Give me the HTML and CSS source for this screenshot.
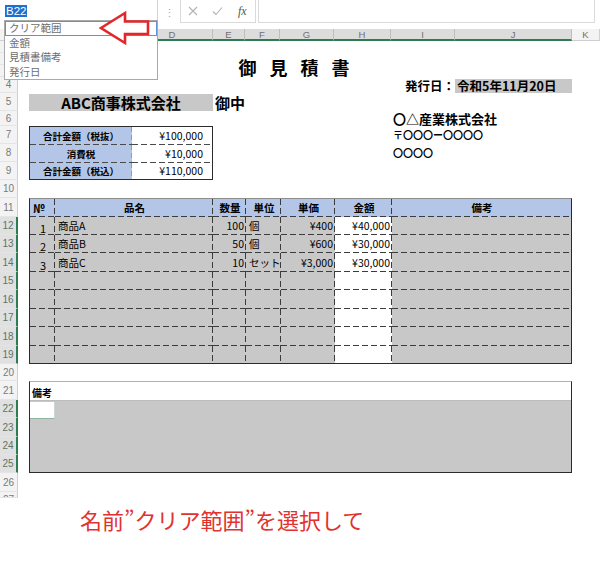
FILE: index.html
```html
<!DOCTYPE html>
<html lang="ja">
<head>
<meta charset="utf-8">
<title>御見積書</title>
<link rel="stylesheet" href="styles.css">
</head>
<body>
<div class="app">
  <div class="toolbar">
    <div class="namebox"><span class="sel">B22</span></div>
    <div class="grip">⋮</div>
    <div class="fbtns">
      <span class="fb"><svg width="10" height="10" viewBox="0 0 10 10"><path d="M1 1L9 9M9 1L1 9" stroke="#b3b3b3" stroke-width="1.1" fill="none"/></svg></span>
      <span class="fb"><svg width="11" height="10" viewBox="0 0 11 10"><path d="M1 5.5L4 8.5L10 1.5" stroke="#b3b3b3" stroke-width="1.1" fill="none"/></svg></span>
      <span class="fb fx">fx</span>
    </div>
    <div class="finput"></div>
  </div>

  <div class="sheet">
    <div class="ch"></div>
    <div class="ch"></div>
    <div class="ch on"></div>
    <div class="ch on"></div>
    <div class="ch on">D</div>
    <div class="ch on">E</div>
    <div class="ch on">F</div>
    <div class="ch on">G</div>
    <div class="ch on">H</div>
    <div class="ch on">I</div>
    <div class="ch on">J</div>
    <div class="ch">K</div>

    <div class="rh"></div>
    <div class="rh"></div>
    <div class="rh"></div>
    <div class="rh">4</div>
    <div class="rh">5</div>
    <div class="rh">6</div>
    <div class="rh">7</div>
    <div class="rh">8</div>
    <div class="rh">9</div>
    <div class="rh">10</div>
    <div class="rh">11</div>
    <div class="rh on">12</div>
    <div class="rh on">13</div>
    <div class="rh on">14</div>
    <div class="rh on">15</div>
    <div class="rh on">16</div>
    <div class="rh on">17</div>
    <div class="rh on">18</div>
    <div class="rh on">19</div>
    <div class="rh">20</div>
    <div class="rh">21</div>
    <div class="rh on">22</div>
    <div class="rh on">23</div>
    <div class="rh on">24</div>
    <div class="rh on">25</div>
    <div class="rh">26</div>
    <div class="rh last">27</div>

    <div class="title">御見積書</div>
    <div class="issue-lbl">発行日：</div>
    <div class="issue-date">令和5年11月20日</div>
    <div class="client">ABC商事株式会社</div>
    <div class="onchu">御中</div>
    <div class="co">〇△産業株式会社</div>
    <div class="addr addr1">〒〇〇〇ー〇〇〇〇</div>
    <div class="addr addr2">〇〇〇〇</div>

    <div class="sum">
      <div class="sl">合計金額（税抜）</div><div class="sv">¥100,000</div>
      <div class="sl">消費税</div><div class="sv">¥10,000</div>
      <div class="sl">合計金額（税込）</div><div class="sv">¥110,000</div>
    </div>

    <div class="items">
      <div class="hd no">№</div><div class="hd">品名</div><div class="hd">数量</div><div class="hd">単位</div><div class="hd">単価</div><div class="hd">金額</div><div class="hd">備考</div>

      <div class="no">1</div><div>商品A</div><div class="num">100</div><div>個</div><div class="num">¥400</div><div class="num amt">¥40,000</div><div></div>
      <div class="no">2</div><div>商品B</div><div class="num">50</div><div>個</div><div class="num">¥600</div><div class="num amt">¥30,000</div><div></div>
      <div class="no">3</div><div>商品C</div><div class="num">10</div><div>セット</div><div class="num">¥3,000</div><div class="num amt">¥30,000</div><div></div>
      <div></div><div></div><div></div><div></div><div></div><div class="amt"></div><div></div>
      <div></div><div></div><div></div><div></div><div></div><div class="amt"></div><div></div>
      <div></div><div></div><div></div><div></div><div></div><div class="amt"></div><div></div>
      <div></div><div></div><div></div><div></div><div></div><div class="amt"></div><div></div>
      <div></div><div></div><div></div><div></div><div></div><div class="amt"></div><div></div>
    </div>

    <div class="memo">
      <div class="memo-lbl">備考</div>
      <div class="memo-body"><div class="active"></div></div>
    </div>
  </div>

  <p class="note">名前”クリア範囲”を選択して</p>

  <ul class="names">
    <li class="hot">クリア範囲</li>
    <li>金額</li>
    <li>見積書備考</li>
    <li>発行日</li>
  </ul>

  <svg class="arrow" width="160" height="50" viewBox="0 0 160 50">
    <polygon points="101,28 125,13 125,21.5 148,21.5 148,34 125,34 125,43" fill="#fff" stroke="#e4262b" stroke-width="2.6" stroke-linejoin="miter"/>
  </svg>
</div>
</body>
</html>
```

FILE: styles.css
```css
* { box-sizing: border-box; margin: 0; padding: 0; }

html, body {
  width: 600px;
  height: 563px;
  overflow: hidden;
  background: #fff;
}

body {
  font-family: "Noto Sans CJK JP", "Noto Sans", sans-serif;
  color: #000;
}

.app {
  position: relative;
  width: 600px;
  height: 563px;
}

/* ---------- formula bar ---------- */
.toolbar {
  display: flex;
  align-items: flex-start;
  height: 23px;
  margin-bottom: 6px;
}

.namebox {
  width: 158px;
  height: 20px;
  border-right: 1px solid #d4d4d4;
  padding: 5px 0 0 5px;
  display: flex;
  align-items: flex-start;
}

.sel {
  display: block;
  background: #1f6fd1;
  color: #fff;
  font-family: "Liberation Sans", Arial, sans-serif;
  font-size: 11.5px;
  line-height: 12px;
  padding: 0 1px;
}

.grip {
  width: 22px;
  text-align: center;
  color: #a6a6a6;
  font-size: 11px;
  line-height: 24px;
}

.fbtns {
  width: 76px;
  height: 23px;
  border-left: 1px solid #dadada;
  border-right: 1px solid #dadada;
  border-bottom: 1px solid #dadada;
  display: flex;
  align-items: center;
}

.fb {
  width: 24.5px;
  display: flex;
  justify-content: center;
  align-items: center;
}

.fx {
  font-family: "Liberation Serif", serif;
  font-style: italic;
  color: #555;
  font-size: 12px;
}

.finput {
  flex: 1;
  margin-left: 2px;
  margin-right: 5px;
  height: 23px;
  border: 1px solid #dadada;
  border-top: none;
  background: #fff;
}

/* ---------- sheet grid ---------- */
.sheet {
  display: grid;
  grid-template-columns: 18px 11px 26px 77px 81px 32px 35px 54px 57px 64px 117px 28px;
  grid-template-rows: 12px 12px 12px 12px 16px 18px 15px 18px 18px 18px 18px 19px 18px 18px 19px 18px 19px 18px 19px 18px 17px 19px 18px 19px 18px 18px 19px 6px;
}

.ch {
  background: #f3f3f3;
  border-right: 1px solid #d0d0d0;
  border-bottom: 1px solid #cfcfcf;
  font-family: "Liberation Sans", Arial, sans-serif;
  font-size: 9.5px;
  color: #707070;
  text-align: center;
  line-height: 11px;
}

.ch.on {
  background: #dcdcdc;
  border-bottom: 2px solid #2e7d52;
  border-right-color: #bdbdbd;
}

.rh {
  grid-column: 1;
  background: #f3f3f3;
  border-right: 1px solid #cfcfcf;
  border-bottom: 1px solid #e4e4e4;
  font-family: "Liberation Sans", Arial, sans-serif;
  font-size: 10px;
  color: #7a7a7a;
  display: flex;
  align-items: center;
  justify-content: center;
  overflow: hidden;
}

.rh.on {
  background: #e0e0e0;
  border-right: 2px solid #2e7d52;
  color: #5d7566;
}

.rh.last {
  align-items: flex-start;
  line-height: 12px;
  padding-top: 2px;
}

/* ---------- header block ---------- */
.title {
  grid-row: 2 / 5;
  grid-column: 3 / 12;
  align-self: end;
  text-align: center;
  font-size: 18px;
  font-weight: 700;
  letter-spacing: 13px;
  line-height: 19px;
}

.issue-lbl {
  grid-row: 5;
  grid-column: 10;
  align-self: end;
  text-align: right;
  font-size: 12.5px;
  font-weight: 700;
  line-height: 15px;
}

.issue-date {
  grid-row: 5;
  grid-column: 11;
  margin-top: 2px;
  background: #c8c8c8;
  font-size: 12.5px;
  font-weight: 700;
  line-height: 14px;
  padding-left: 2px;
  display: flex;
  align-items: flex-end;
}

.client {
  grid-row: 6;
  grid-column: 3 / 6;
  background: #c8c8c8;
  font-size: 15px;
  font-weight: 700;
  text-align: center;
  line-height: 17px;
  margin-top: 1px;
}

.onchu {
  grid-row: 6;
  grid-column: 6 / 8;
  align-self: end;
  padding-left: 2px;
  font-size: 15px;
  font-weight: 700;
  line-height: 17px;
}

.co {
  grid-row: 7;
  grid-column: 10 / 12;
  align-self: end;
  padding-left: 2px;
  font-size: 13px;
  font-weight: 700;
  line-height: 15px;
}

.addr {
  grid-column: 10 / 12;
  align-self: end;
  padding: 0 0 3px 2px;
  font-size: 10px;
  font-weight: 700;
  line-height: 12px;
}

.addr1 { grid-row: 8; }
.addr2 { grid-row: 9; }

/* ---------- summary box ---------- */
.sum {
  grid-row: 8 / 11;
  grid-column: 3 / 6;
  border: 1px solid #2b2b2b;
  display: grid;
  grid-template-columns: 102px 1fr;
  grid-template-rows: 18px 18px 1fr;
}

.sum > div {
  display: flex;
  align-items: center;
  font-size: 10.5px;
  line-height: 12px;
  background-image:
    repeating-linear-gradient(90deg, #4a4a4a 0 6px, transparent 6px 9px),
    repeating-linear-gradient(180deg, #9a9a9a 0 5px, transparent 5px 8px);
  background-size: 100% 1px, 1px 100%;
  background-position: left bottom, right top;
  background-repeat: no-repeat;
}

.sum > div:nth-last-child(-n+2) { background-size: 0 0, 1px 100%; }
.sum > .sv { background-size: 100% 1px, 0 0; }
.sum > .sv:last-child { background-size: 0 0, 0 0; }

.sl {
  background-color: #b4c6e7;
  justify-content: center;
  font-weight: 700;
  font-size: 9.5px !important;
}

.sv {
  background-color: #fff;
  justify-content: flex-end;
  padding-right: 9px;
}

/* ---------- items table ---------- */
.items {
  grid-row: 12 / 21;
  grid-column: 3 / 12;
  border: 1px solid #2b2b2b;
  border-top-color: #8c8c8c;
  display: grid;
  grid-template-columns: 25px 158px 33px 35px 54px 57px 1fr;
  grid-template-rows: 18px 18px 18px 19px 18px 19px 18px 19px 1fr;
}

.items > div {
  display: flex;
  align-items: flex-end;
  padding: 0 2px 3px 3px;
  font-size: 10.5px;
  line-height: 12px;
  background-color: #c8c8c8;
  background-image:
    repeating-linear-gradient(90deg, #3c3c3c 0 6px, transparent 6px 9px),
    repeating-linear-gradient(180deg, #3c3c3c 0 6px, transparent 6px 9px);
  background-size: 100% 1px, 1px 100%;
  background-position: left bottom, right top;
  background-repeat: no-repeat;
  white-space: nowrap;
}

.items > div:nth-child(7n) { background-size: 100% 1px, 0 0; }
.items > div:nth-last-child(-n+7) { background-size: 0 0, 1px 100%; }
.items > div:nth-last-child(-n+7):nth-child(7n) { background-size: 0 0, 0 0; }

.items > .hd {
  background-color: #b4c6e7;
  justify-content: center;
  align-items: center;
  padding-bottom: 0;
  font-size: 10.5px;
  font-weight: 700;
}

.items > .hd.no { justify-content: flex-start; padding-left: 3px; }

.items > .no {
  justify-content: center;
  padding-bottom: 1px;
  font-size: 11px;
}

.items > .num { justify-content: flex-end; }
.items > .amt { background-color: #fff; }

/* ---------- remarks ---------- */
.memo {
  grid-row: 22 / 27;
  grid-column: 3 / 12;
  border: 1px solid #2b2b2b;
  border-top-color: #b0b0b0;
  display: grid;
  grid-template-rows: 18px 1fr;
}

.memo-lbl {
  display: flex;
  align-items: flex-end;
  padding: 0 0 1px 2px;
  font-size: 10px;
  font-weight: 700;
  line-height: 12px;
}

.memo-body {
  background: #c8c8c8;
  border-top: 1px solid #bdbdbd;
}

.active {
  width: 25px;
  height: 17px;
  margin-top: 1px;
  background: #fff;
  border-bottom: 1px solid #8fb39e;
  border-right: 1px solid #c9d9cf;
}

/* ---------- annotation ---------- */
.note {
  margin-top: 9px;
  padding-left: 80px;
  font-size: 22px;
  line-height: 25px;
  color: #e2322f;
}

/* ---------- overlays ---------- */
.names {
  position: absolute;
  left: 4px;
  top: 20px;
  width: 154px;
  height: 60px;
  background: #fff;
  border: 1px solid #a9a9a9;
  list-style: none;
}

.names li {
  height: 14.5px;
  padding-left: 3px;
  border: 1px solid transparent;
  font-size: 10.5px;
  line-height: 12.5px;
  color: #6d6d6d;
}

.names li.hot { border-color: #5f93d4; }

.arrow {
  position: absolute;
  left: 0;
  top: 0;
  overflow: visible;
}
```
